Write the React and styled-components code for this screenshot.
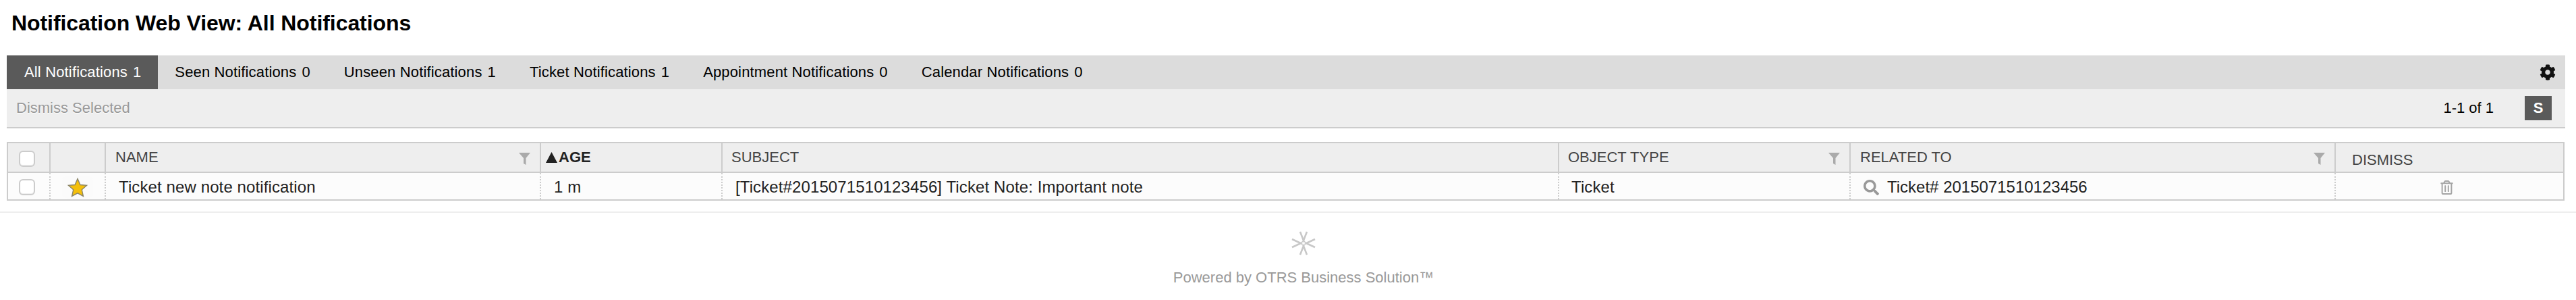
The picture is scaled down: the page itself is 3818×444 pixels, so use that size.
import React from "react";
import styled, { createGlobalStyle } from "styled-components";
import { FaCog, FaSearch, FaRegTrashAlt } from "react-icons/fa";

const GlobalStyle = createGlobalStyle`
  html, body {
    margin: 0;
    padding: 0;
    background: #fff;
    font-family: "Liberation Sans", Arial, sans-serif;
  }
`;

const Page = styled.div`
  width: 3818px;
  height: 444px;
  overflow: hidden;
  box-sizing: border-box;
`;

const Content = styled.div`
  padding: 16px 16px 0 10px;
`;

const Title = styled.h1`
  margin: 0 0 0 7px;
  font-size: 32px;
  line-height: 37px;
  font-weight: bold;
  letter-spacing: -0.07px;
  color: #000;
`;

const TabBar = styled.div`
  margin-top: 29px;
  display: flex;
  align-items: center;
  height: 50px;
  background: #dcdcdc;
  padding-right: 14px;
`;

const Tab = styled.a`
  display: flex;
  align-items: center;
  height: 100%;
  padding: 0 25px 0 ${(p) => (p.$active ? "26px" : "25px")};
  font-size: 22px;
  letter-spacing: 0.15px;
  white-space: nowrap;
  color: ${(p) => (p.$active ? "#fff" : "#000")};
  background: ${(p) => (p.$active ? "#5a5a5a" : "transparent")};
`;

const Count = styled.span`
  margin-left: 8px;
`;

const Settings = styled.div`
  margin-left: auto;
  display: flex;
  font-size: 24px;
  color: #111;
`;

const ActionBar = styled.div`
  display: flex;
  align-items: center;
  height: 56px;
  padding: 0 20px 0 14px;
  background: #eee;
  border-bottom: 2px solid #ccc;
`;

const Dismiss = styled.span`
  font-size: 22px;
  color: #999;
  text-shadow: 0 1px 0 #fff;
`;

const Paging = styled.span`
  margin-left: auto;
  font-size: 22px;
  color: #000;
`;

const SizeButton = styled.span`
  margin-left: 46px;
  width: 40px;
  height: 36px;
  display: flex;
  align-items: center;
  justify-content: center;
  background: #5a5a5a;
  color: #fff;
  font-size: 22px;
  font-weight: bold;
`;

const Table = styled.table`
  margin-top: 20px;
  width: 3791px;
  table-layout: fixed;
  border-collapse: separate;
  border-spacing: 0;
  border: 2px solid #ccc;
`;

const HeadCell = styled.th`
  position: relative;
  box-sizing: border-box;
  height: 44px;
  padding: ${(p) => p.$top || 0}px 0 0 ${(p) => p.$pad ?? 13}px;
  background: #eee;
  border-bottom: 2px solid #ccc;
  border-left: ${(p) => (p.$first ? "0" : "2px solid #ccc")};
  text-align: left;
  font-size: 22px;
  font-weight: ${(p) => (p.$sorted ? "bold" : "normal")};
  color: ${(p) => (p.$sorted ? "#222" : "#444")};
  white-space: nowrap;
`;

const SortArrow = styled.svg`
  width: 17px;
  height: 16px;
  margin-right: 2px;
  vertical-align: -1px;
`;

const BodyCell = styled.td`
  box-sizing: border-box;
  height: 39px;
  padding: 3px 0 0 ${(p) => p.$pad || 0}px;
  background: #fcfcfc;
  border-left: ${(p) => (p.$first ? "0" : "2px dotted #ccc")};
  font-size: 24px;
  letter-spacing: 0.11px;
  color: #222;
  white-space: nowrap;
`;

const Check = styled.span`
  display: block;
  box-sizing: border-box;
  width: 24px;
  height: 24px;
  margin-left: 15px;
  background: #fff;
  border: 2px solid #ccc;
  border-radius: 6px;
  box-shadow: inset 0 -1px 1px #eee;
`;

const StarBox = styled.span`
  display: flex;
  width: 46px;
  height: 34px;
  margin: 0 auto;
  align-items: center;
  justify-content: center;
  background: #fbfbfb;
  border-radius: 8px;
`;

const FilterMark = styled.svg`
  position: absolute;
  right: 14px;
  top: 14px;
  width: 17px;
  height: 18px;
`;

const RelatedWrap = styled.span`
  display: flex;
  align-items: center;
  gap: 12px;
  letter-spacing: 0;
`;

const SearchMark = styled(FaSearch)`
  color: #999;
  font-size: 23px;
`;

const TrashMark = styled(FaRegTrashAlt)`
  display: block;
  margin: 0 auto;
  padding-right: 9px;
  color: #a5a5a5;
  font-size: 21px;
`;

const Footer = styled.footer`
  margin-top: 16px;
  border-top: 2px solid #eee;
  display: flex;
  flex-direction: column;
  align-items: center;
  padding: 27px 0 0 46px;
`;

const FooterText = styled.div`
  margin-top: 20px;
  font-size: 22px;
  line-height: 26px;
  color: #999;
`;

const Filter = () => (
  <FilterMark viewBox="0 0 17 18">
    <path d="M0 0h17L10.5 8v10L7 16V8z" fill="#aaa" />
  </FilterMark>
);

const Star = () => (
  <svg width="30" height="29" viewBox="0 0 30 29">
    <path
      d="M15 1.5l3.9 9 9.6.9-7.2 6.4 2.1 9.5L15 22.8l-8.4 4.5 2.1-9.5-7.2-6.4 9.6-.9z"
      fill="#f4bf0a"
      stroke="#8a8468"
      strokeWidth="1.4"
    />
  </svg>
);

const Logo = () => (
  <svg width="36" height="36" viewBox="-18 -18 36 36" fill="none" stroke="#c8c8c8" strokeWidth="2.6">
    <path d="M-5 -17L0 -4L5 -17M-5 17L0 4L5 17" />
    <path d="M-17 -6L-4 0L-17 6M17 -6L4 0L17 6" />
    <path d="M0 -4L4 0L0 4L-4 0Z" strokeWidth="1.4" />
  </svg>
);

const tabs = [
  ["All Notifications", 1],
  ["Seen Notifications", 0],
  ["Unseen Notifications", 1],
  ["Ticket Notifications", 1],
  ["Appointment Notifications", 0],
  ["Calendar Notifications", 0],
];

export default function App() {
  return (
    <Page>
      <GlobalStyle />
      <Content>
        <Title>Notification Web View: All Notifications</Title>
        <TabBar>
          {tabs.map(([label, count], i) => (
            <Tab key={label} $active={i === 0}>
              {label}
              <Count>{count}</Count>
            </Tab>
          ))}
          <Settings>
            <FaCog />
          </Settings>
        </TabBar>
        <ActionBar>
          <Dismiss>Dismiss Selected</Dismiss>
          <Paging>1-1 of 1</Paging>
          <SizeButton>S</SizeButton>
        </ActionBar>
        <Table>
          <colgroup>
            <col style={{ width: 61 }} />
            <col style={{ width: 82 }} />
            <col style={{ width: 645 }} />
            <col style={{ width: 269 }} />
            <col style={{ width: 1240 }} />
            <col style={{ width: 432 }} />
            <col style={{ width: 719 }} />
            <col />
          </colgroup>
          <thead>
            <tr>
              <HeadCell $first $pad={1} $top={4}>
                <Check />
              </HeadCell>
              <HeadCell />
              <HeadCell $pad={14}>
                NAME
                <Filter />
              </HeadCell>
              <HeadCell $sorted $pad={7}>
                <SortArrow viewBox="0 0 17 16">
                  <path d="M8.5 0L17 16H0z" fill="#222" />
                </SortArrow>
                AGE
              </HeadCell>
              <HeadCell>SUBJECT</HeadCell>
              <HeadCell>
                OBJECT TYPE
                <Filter />
              </HeadCell>
              <HeadCell $pad={14}>
                RELATED TO
                <Filter />
              </HeadCell>
              <HeadCell $top={8} $pad={24}>
                DISMISS
              </HeadCell>
            </tr>
          </thead>
          <tbody>
            <tr>
              <BodyCell $first $pad={1}>
                <Check />
              </BodyCell>
              <BodyCell>
                <StarBox>
                  <Star />
                </StarBox>
              </BodyCell>
              <BodyCell $pad={19}>Ticket new note notification</BodyCell>
              <BodyCell $pad={19}>1 m</BodyCell>
              <BodyCell $pad={19}>[Ticket#2015071510123456] Ticket Note: Important note</BodyCell>
              <BodyCell $pad={18}>Ticket</BodyCell>
              <BodyCell $pad={19}>
                <RelatedWrap>
                  <SearchMark />
                  Ticket# 2015071510123456
                </RelatedWrap>
              </BodyCell>
              <BodyCell>
                <TrashMark />
              </BodyCell>
            </tr>
          </tbody>
        </Table>
      </Content>
      <Footer>
        <Logo />
        <FooterText>Powered by OTRS Business Solution™</FooterText>
      </Footer>
    </Page>
  );
}
